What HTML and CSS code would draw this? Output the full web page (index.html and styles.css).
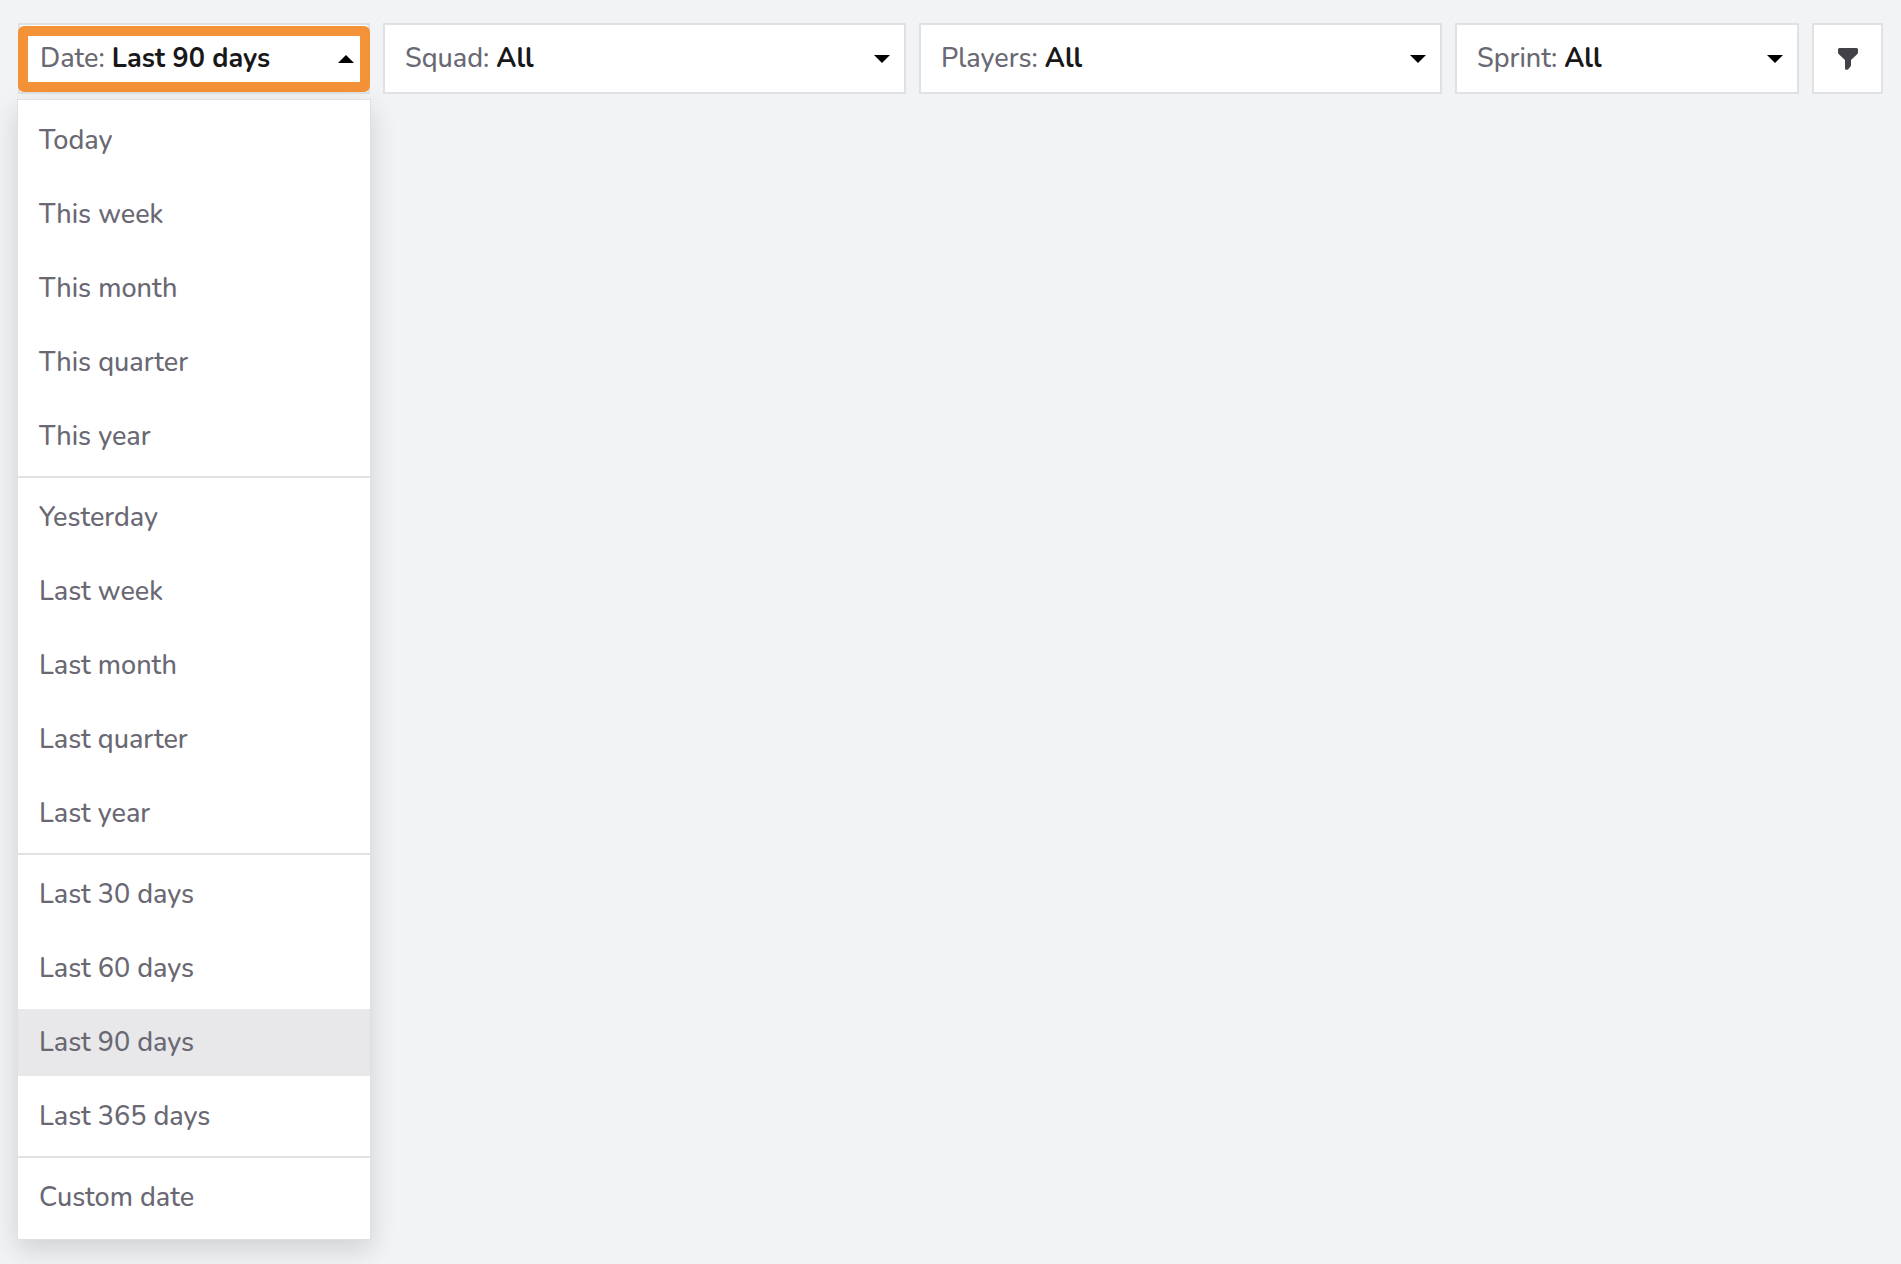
FILE: index.html
```html
<!DOCTYPE html>
<html lang="en">
<head>
<meta charset="utf-8">
<meta name="viewport" content="width=device-width, initial-scale=1">
<title>Filters</title>
<link rel="stylesheet" href="styles.css">
</head>
<body>
<form class="filters">
  <div class="date-filter">
    <button class="field field-open" type="button" aria-haspopup="true" aria-expanded="true" aria-controls="date-menu">
      <span class="field-label">Date:</span>
      <span class="field-value">Last 90 days</span>
      <svg class="caret" viewBox="0 0 16 8" aria-hidden="true"><path d="M0 8 8 0l8 8z"/></svg>
    </button>
    <div class="menu" id="date-menu">
      <ul class="menu-group">
        <li><button class="menu-item" type="button">Today</button></li>
        <li><button class="menu-item" type="button">This week</button></li>
        <li><button class="menu-item" type="button">This month</button></li>
        <li><button class="menu-item" type="button">This quarter</button></li>
        <li><button class="menu-item" type="button">This year</button></li>
      </ul>
      <ul class="menu-group">
        <li><button class="menu-item" type="button">Yesterday</button></li>
        <li><button class="menu-item" type="button">Last week</button></li>
        <li><button class="menu-item" type="button">Last month</button></li>
        <li><button class="menu-item" type="button">Last quarter</button></li>
        <li><button class="menu-item" type="button">Last year</button></li>
      </ul>
      <ul class="menu-group">
        <li><button class="menu-item" type="button">Last 30 days</button></li>
        <li><button class="menu-item" type="button">Last 60 days</button></li>
        <li><button class="menu-item menu-item-selected" type="button" aria-current="true">Last 90 days</button></li>
        <li><button class="menu-item" type="button">Last 365 days</button></li>
      </ul>
      <ul class="menu-group">
        <li><button class="menu-item" type="button">Custom date</button></li>
      </ul>
    </div>
  </div>
  <div class="field">
    <label class="field-label" for="squad">Squad:</label>
    <select class="field-value" id="squad"><option>All</option></select>
    <svg class="caret" viewBox="0 0 16 8" aria-hidden="true"><path d="M0 0h16L8 8z"/></svg>
  </div>
  <div class="field">
    <label class="field-label" for="players">Players:</label>
    <select class="field-value" id="players"><option>All</option></select>
    <svg class="caret" viewBox="0 0 16 8" aria-hidden="true"><path d="M0 0h16L8 8z"/></svg>
  </div>
  <div class="field">
    <label class="field-label" for="sprint">Sprint:</label>
    <select class="field-value" id="sprint"><option>All</option></select>
    <svg class="caret" viewBox="0 0 16 8" aria-hidden="true"><path d="M0 0h16L8 8z"/></svg>
  </div>
  <button class="filter-button" type="button" aria-label="Filter">
    <svg class="funnel" viewBox="0 0 20 22" aria-hidden="true"><path d="M1.5 0h17Q20 0 20 1.500v3q0 .8-.6 1.400L13 12v5q0 .8-.5 1.500l-1.800 2.300q-.7.900-1.700.900h-.8Q7 21.700 7 20.500V12L.6 5.900Q0 5.300 0 4.500v-3Q0 0 1.500 0z"/></svg>
  </button>
</form>
</body>
</html>
```
FILE: styles.css
```css
* {
  box-sizing: border-box;
}

body {
  min-height: 100vh;
  margin: 0;
  background: #f2f3f5;
  color: #696873;
  font: 500 27px/35px Nunito, Lato, sans-serif;
}

button,
select {
  margin: 0;
  padding: 0;
  border: 0;
  background: none;
  color: inherit;
  font: inherit;
}

.filters {
  display: grid;
  grid-template-columns: 352fr 523fr 523fr 344fr 71px;
  gap: 13px;
  padding: 23px 18px;
}

.date-filter {
  position: relative;
}

.field {
  position: relative;
  display: flex;
  align-items: center;
  gap: 7px;
  width: 100%;
  height: 71px;
  padding: 0 14px 0 20px;
  border: 2px solid #e0e1e4;
  background: #fff;
}

.field-value {
  flex: 1;
  appearance: none;
  color: #18181a;
  font-weight: 700;
  text-align: left;
}

.field-open::after {
  content: "";
  position: absolute;
  inset: 1px -2px 0;
  border: 10px solid #f39237;
  border-radius: 6px;
}

.caret {
  width: 16px;
  height: 8px;
  fill: #000;
}

.menu {
  position: absolute;
  top: 76px;
  left: -1px;
  right: -1px;
  padding: 1px 0 2px;
  border: 1px solid #dfe0e3;
  background: #fff;
  box-shadow: 0 10px 26px rgba(0, 0, 0, 0.14);
}

.menu-group {
  display: grid;
  gap: 7px;
  margin: 0;
  padding: 6px 0;
  list-style: none;
}

.menu-group + .menu-group {
  border-top: 2px solid #e0e0e5;
}

.menu-item {
  display: block;
  width: 100%;
  height: 67px;
  padding: 0 21px;
  text-align: left;
}

.menu-item-selected {
  background: #e8e8ea;
}

.filter-button {
  display: grid;
  place-items: center;
  height: 71px;
  border: 2px solid #e0e1e4;
  background: #fff;
}

.funnel {
  width: 20px;
  height: 22px;
  fill: #414147;
}
```
